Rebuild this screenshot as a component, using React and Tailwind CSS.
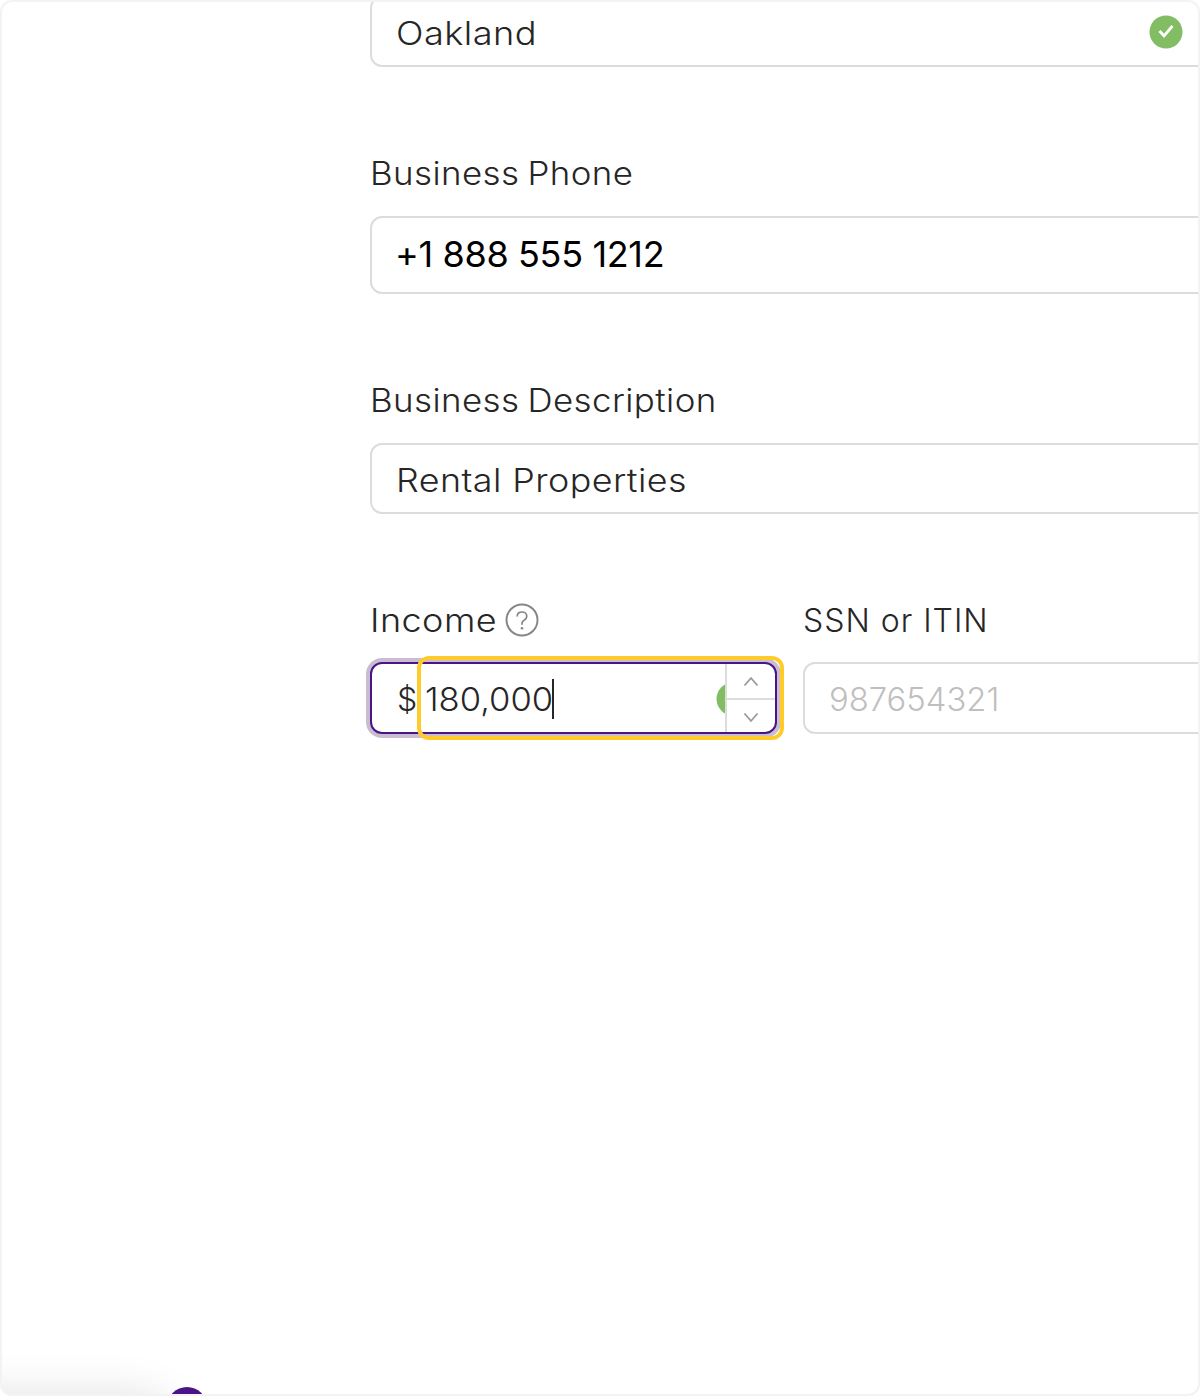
import React from 'react'

const CheckBadge = ({ className }) => (
  <svg viewBox="0 0 34 34" className={className} aria-hidden="true">
    <circle cx="17" cy="17" r="16.5" fill="#83bd63" />
    <path d="M10.5 16 L15 20.8 L23.5 11" fill="none" stroke="#fff" strokeWidth="2.8" />
  </svg>
)

const HelpIcon = () => (
  <svg viewBox="0 0 34 34" className="-mt-px size-[34px] shrink-0" fill="none" stroke="#858585" aria-hidden="true">
    <circle cx="17" cy="17" r="15.5" strokeWidth="1.9" />
    <path d="M12.2 13.4c0-2.7 2.1-4.4 4.8-4.4s4.8 1.7 4.8 4.2c0 2-1.2 3.1-2.7 4-1.4.8-2.1 1.6-2.1 3.2v1.4" strokeWidth="1.7" />
    <circle cx="17" cy="25.2" r="1.3" fill="#858585" stroke="none" />
  </svg>
)

const Chevron = ({ d }) => (
  <svg viewBox="0 0 16 12" className="h-3 w-4" fill="none" stroke="#999" strokeWidth="1.8" aria-hidden="true">
    <path d={d} />
  </svg>
)

const Label = ({ children, className }) => (
  <div className={`flex h-10 items-center whitespace-nowrap text-[32px] leading-10 ${className}`}>
    {children}
  </div>
)

const Field = ({ children, className }) => (
  <div className={`flex items-center whitespace-nowrap rounded-xl border-2 border-[#dcdcdc] bg-white pl-[25px] text-[32px] leading-10 ${className}`}>
    {children}
  </div>
)

const App = () => (
  <div className="relative h-[1396px] w-[1200px] overflow-hidden rounded-xl border-2 border-[#f2f2f7] bg-white font-['Inter','Liberation_Sans',sans-serif] font-light text-[#262626]">
    <div className="-mt-[6px] ml-[368px] flex w-[880px] flex-col">
      <Field className="h-[71px]">
        <span className="-ml-px origin-left scale-x-[1.13] pt-[4px] tracking-[0.4px]">Oakland</span>
        <CheckBadge className="ml-auto mr-[65px] size-[34px]" />
      </Field>

      <Label className="mt-[86px] pt-[2px]">
        <span className="origin-left scale-x-[1.089] tracking-[0.4px] [word-spacing:-2px]">Business Phone</span>
      </Label>
      <Field className="mt-[23px] h-[78px] font-normal text-black">
        <span className="-ml-[2px] pb-[2px] text-[36px] tracking-[-0.35px]">+1 888 555 1212</span>
      </Field>

      <Label className="mt-[86px] pt-[1px]">
        <span className="origin-left scale-x-[1.089] tracking-[0.4px] [word-spacing:-2px]">Business Description</span>
      </Label>
      <Field className="mt-[23px] h-[71px]">
        <span className="-ml-px origin-left scale-x-[1.12] pt-[4px] tracking-[0.4px]">Rental Properties</span>
      </Field>

      <div className="mt-[86px] flex gap-[26px]">
        <div className="w-[407px]">
          <Label>
            <span className="w-[135px]">
              <span className="inline-block origin-left scale-x-[1.125] pt-[1px] tracking-[0.4px]">Income</span>
            </span>
            <HelpIcon />
          </Label>
          <div className="relative mt-[22px]">
            <div className="flex h-[72px] items-stretch overflow-hidden rounded-xl border-2 border-[#4b1388] bg-white pl-[25px] text-[32px] leading-[72px] shadow-[0_0_0_4px_#c9bdd1]">
              <span className="w-[28px]">$</span>
              <span className="w-[127px]">
                <span className="inline-block origin-left scale-x-[1.08]">180,000</span>
              </span>
              <span className="mt-[2px] h-10 w-[2px] self-center bg-[#262626]" />
              <div className="ml-auto flex w-[9px] items-center overflow-hidden">
                <CheckBadge className="mt-[2px] size-[34px] shrink-0" />
              </div>
              <div className="flex w-[50px] flex-col border-l-2 border-[#dcdcdc]">
                <div className="flex h-[34px] items-center justify-center">
                  <Chevron d="M1.5 10.5 L8 3 L14.5 10.5" />
                </div>
                <div className="flex flex-1 items-center justify-center border-t-2 border-[#dcdcdc] pt-[3px]">
                  <Chevron d="M1.5 1.5 L8 9 L14.5 1.5" />
                </div>
              </div>
            </div>
            {/* highlight ring around the focused input */}
            <div className="absolute -top-[6px] left-[47px] h-[84px] w-[367px] rounded-xl border-4 border-[#ffcb2b]" />
          </div>
        </div>

        <div className="w-[440px]">
          <Label className="pt-[1px] tracking-[1px]">SSN or ITIN</Label>
          <Field className="mt-[22px] h-[72px] text-[#bfbfbf]">
            <span className="-ml-px origin-left scale-x-[1.025] pt-[4px]">987654321</span>
          </Field>
        </div>
      </div>
    </div>

    {/* floating widget peeking in from below */}
    <div className="absolute -left-[80px] top-[1402px] h-20 w-[250px] rounded-full shadow-[0_-2px_48px_4px_rgba(0,0,0,0.14)]" />
    <div className="absolute left-[165px] top-[1385px] size-10 rounded-full bg-[#4b1388]" />
  </div>
)

export default App
